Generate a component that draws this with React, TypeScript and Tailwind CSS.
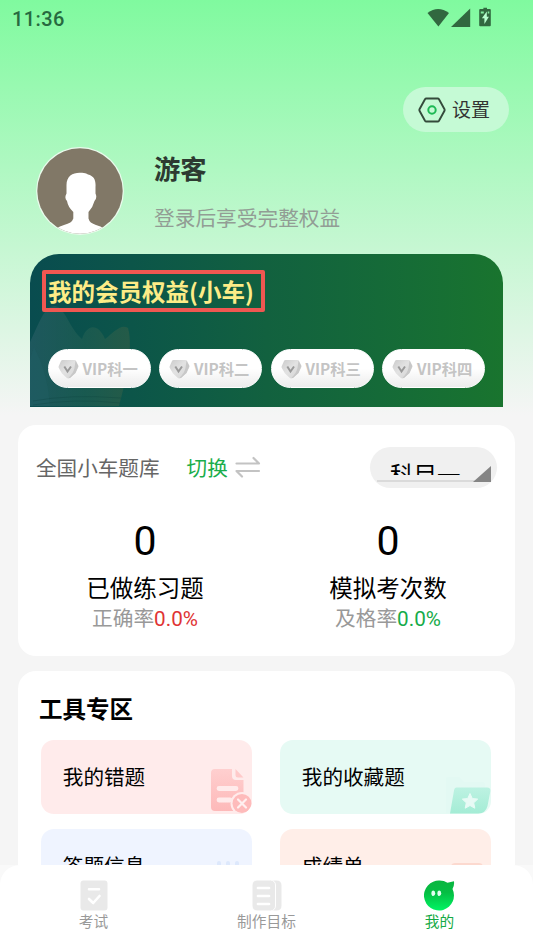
import React from "react";

const subjects = ["VIP科一", "VIP科二", "VIP科三", "VIP科四"];

function StatusBar() {
  return (
    <div className="flex h-9 items-center justify-between pl-3 pr-[39px] pt-0.5 text-[#276a40]">
      <span className="font-[Roboto] text-[20px] font-medium leading-[34px] tracking-[0.4px]">11:36</span>
      <svg className="mb-0.5" width="67" height="22" viewBox="0 0 67 22" fill="#31683f">
        <path d="M0.5 6Q11 -2.2 22 6L11.4 19.5Z" />
        <path d="M43.2 1.5V20H24Z" />
        <path d="M56.4 2V0.8h3.6V2h2.8q1 0 1 1v15.3q0 1-1 1h-9.6q-1 0-1-1V3q0-1 1-1Z" />
        <path d="M59.8 4.5l-4.9 6.8h2.5v5.6l4.5-7.1h-2.1Z" fill="#b9ffd0" />
        <path d="M53.8 4.4h3v2h-3zM60.7 4.4h1.6v2h-1.6z" fill="#83eba0" />
      </svg>
    </div>
  );
}

function Gem() {
  return (
    <svg width="21" height="20" viewBox="0 0 21 20">
      <defs>
        <linearGradient id="gem" x1="0" y1="0" x2="1" y2="1">
          <stop offset="0" stopColor="#cbcbcb" />
          <stop offset=".45" stopColor="#e2e2e2" />
          <stop offset="1" stopColor="#d4d4d4" />
        </linearGradient>
      </defs>
      <path d="M4.5 1h12q1 0 1.500.8L20.200 6.500q.4.800.1 1.800L17.500 14L12.500 18.500q-2.200 1.800-4.200 0L4 14.500L.8 9q-.4-.9-.1-1.8L3 1.900Q3.500 1 4.500 1Z" fill="url(#gem)" />
      <path d="M17.500 1.500L20.400 7L17.500 14L12 19L10.500 18.500Q15 15 16.500 9Z" fill="#c8c8c8" />
      <path d="M6.300 7.500l3.200 5L13 7.500" fill="none" stroke="#999" strokeWidth="2" />
    </svg>
  );
}

function MemberCard() {
  return (
    <section className="relative mx-[30px] flex h-[153px] flex-col justify-between overflow-hidden rounded-t-[29px] bg-linear-to-r from-[#094c4f] via-[#12613f] to-[#19742e] pb-[19px] pt-4">
      <svg className="absolute left-0 top-[50px]" width="104" height="103" viewBox="0 0 104 103">
        <defs>
          <linearGradient id="crown" x1="0" y1="0" x2="1" y2="0">
            <stop offset="0" stopColor="#2c6068" />
            <stop offset=".55" stopColor="#236053" />
            <stop offset="1" stopColor="#365f46" />
          </linearGradient>
        </defs>
        <path d="M0 38C9 20 14 2 25 2C35 3 39 24 52 35C57 20 68 19 75 35C83 29 91 19 98 24C104 44 94 84 89 102H0Z" fill="url(#crown)" opacity=".58" />
        <path d="M4 43Q18 69 20 102H0V56Z" fill="#23646b" opacity=".25" />
        <path d="M3 97Q40 90 91 94M3 101Q45 94 90 99" fill="none" stroke="#073c36" strokeOpacity=".25" />
      </svg>
      <h2 className="relative ml-3 flex h-[42px] w-[223px] items-center rounded-[2px] border-4 border-[#f05751] pl-0.5 text-[23.500px] font-bold leading-none text-[#fdec87]">
        <span className="whitespace-nowrap pt-0.5">我的会员权益(小车)</span>
      </h2>
      <div className="relative ml-[18px] grid w-[437px] grid-cols-4 gap-[9px]">
        {subjects.map((s) => (
          <div key={s} className="-ml-[0.500px] flex h-[39px] items-center gap-1 whitespace-nowrap rounded-full border border-white bg-linear-to-b from-white from-50% to-[#ececec] pl-[9px] text-[15.300px] font-bold text-[#c4c4c4]">
            <Gem />
            <span>{s}</span>
          </div>
        ))}
      </div>
    </section>
  );
}

function Stat({ label, rateLabel, color }: { label: string; rateLabel: string; color: string }) {
  return (
    <div className="flex w-[243px] flex-col items-center">
      <span className="h-[48px] font-[Roboto] text-[41px] leading-[48px] text-black">0</span>
      <span className="mt-[6px] text-[23.500px] leading-[32px] text-black">{label}</span>
      <span className="text-[20.700px] leading-[28px] text-[#999]">
        {rateLabel}
        <span className={"font-[Roboto] " + color}>0.0%</span>
      </span>
    </div>
  );
}

function PracticeCard() {
  return (
    <section className="mx-[18px] mt-[18px] h-[231px] rounded-[18px] bg-white pt-[22px]">
      <div className="flex h-[41px] items-center pl-[18px] pr-[18px] text-[20.600px]">
        <span className="text-[#666]">全国小车题库</span>
        <span className="ml-[27px] text-[#1aad4b]">切换</span>
        <svg className="mb-px ml-[7px]" width="26" height="22" viewBox="0 0 26 22" fill="none" stroke="#c3c3c3" strokeWidth="2.200" strokeLinejoin="round" strokeLinecap="round">
          <path d="M1.500 7.500H24L18.500 2M24 15H1.500L7 20.500" />
        </svg>
        <div className="ml-auto flex h-[41px] w-[127px] rounded-full bg-[#f0f0f0] pl-[7px]">
          <div className="flex h-[35px] w-[114px] items-end justify-between border-b-2 border-[#dadada]">
            <div className="mb-[5px] ml-[13px] h-[16px] overflow-hidden whitespace-nowrap text-[23.500px] leading-[30px] text-black">科目一</div>
            <svg className="-mb-0.5" width="18" height="16" viewBox="0 0 18 16"><path d="M18 0V16H0Z" fill="#858585" /></svg>
          </div>
        </div>
      </div>
      <div className="mt-[29px] flex pl-[5.500px]">
        <Stat label="已做练习题" rateLabel="正确率" color="text-[#e03434]" />
        <Stat label="模拟考次数" rateLabel="及格率" color="text-[#16ab4a]" />
      </div>
    </section>
  );
}

function WrongIcon() {
  return (
    <svg width="42" height="46" viewBox="0 0 42 46">
      <defs>
        <linearGradient id="wrong" x1="0" y1="0" x2="0" y2="1">
          <stop offset="0" stopColor="#ffcfcf" />
          <stop offset="1" stopColor="#fdb9b9" />
        </linearGradient>
      </defs>
      <path d="M5 1H22V8q0 4 4 4h7.500V38q0 5-5 5H5q-4 0-4-4V5q0-4 4-4Z" fill="url(#wrong)" />
      <path d="M25.500 1L33.500 9.500H28q-2.500 0-2.500-2.500Z" fill="#ffcaca" />
      <path d="M9 20.500H26M9 32H20" stroke="#ffebeb" strokeWidth="4.800" strokeLinecap="round" />
      <circle cx="32" cy="35.500" r="11.500" fill="#ffebeb" />
      <circle cx="32" cy="35.500" r="9.500" fill="#febbbb" />
      <path d="M28 31.500l8 8m0-8l-8 8" stroke="#fff0f0" strokeWidth="2.200" strokeLinecap="round" />
    </svg>
  );
}

function FavoriteIcon() {
  return (
    <svg width="46" height="38" viewBox="0 0 46 38">
      <defs>
        <linearGradient id="fav" x1="0" y1="0" x2="0" y2="1">
          <stop offset="0" stopColor="#bdf2e2" />
          <stop offset="1" stopColor="#a4ecd5" />
        </linearGradient>
      </defs>
      <path d="M1 3q0-2 2-2h11l5 5h18q3 0 3 3v4H10L5 37H1Z" fill="#e3f9f3" />
      <path d="M11.500 11.500H42q4 0 3.300 4L42.500 30q-2 7.500-9 7.500H5l4-23q.5-3 2.500-3Z" fill="url(#fav)" />
      <path d="M25 17.500l2.300 5 5.400.6-4 3.700 1.100 5.400-4.800-2.700-4.800 2.700 1.100-5.400-4-3.700 5.400-.6Z" fill="#e8faf5" stroke="#e8faf5" strokeLinejoin="round" />
    </svg>
  );
}

function Tool({ label, tint, children }: { label: string; tint: string; children?: React.ReactNode }) {
  return (
    <div className={"flex h-[74px] items-end justify-between overflow-hidden rounded-[13px] pl-[21.500px] " + tint}>
      <span className="self-center whitespace-nowrap pb-0.5 text-[20.600px] text-black">{label}</span>
      {children}
    </div>
  );
}

function ToolsCard() {
  return (
    <section className="mx-[18px] mt-[15px] h-[280px] shrink-0 rounded-[18px] bg-white pt-[21px]">
      <h2 className="pl-[21px] text-[23.500px] font-bold leading-8 text-black">工具专区</h2>
      <div className="ml-[23.300px] mr-[23.700px] mt-4 grid grid-cols-2 gap-x-7 gap-y-[15px]">
        <Tool label="我的错题" tint="bg-[#ffebeb]"><WrongIcon /></Tool>
        <Tool label="我的收藏题" tint="bg-[#e6faf4]"><FavoriteIcon /></Tool>
        <Tool label="答题信息" tint="bg-[#eff4ff]">
          <svg className="mr-3 mb-[34px]" width="24" height="9" viewBox="0 0 24 9" fill="#dde8fc">
            <rect x="1" y="1" width="4" height="8" rx="2" /><rect x="10" y="1" width="4" height="8" rx="2" /><rect x="19" y="1" width="4" height="8" rx="2" />
          </svg>
        </Tool>
        <Tool label="成绩单" tint="bg-[#ffeee8]">
          <div className="mr-2 h-10 w-8 rounded-t bg-[#fcd9cf]" />
        </Tool>
      </div>
    </section>
  );
}

function BottomNav() {
  return (
    <div className="h-[83px] shrink-0 bg-[#f9f9f9]">
      <nav className="grid h-full grid-cols-[187px_159px_187px] rounded-t-[20px] bg-white pt-[15px] text-[14.700px] leading-5 text-[#999]">
        <div className="flex flex-col items-center">
          <svg width="28" height="31" viewBox="0 0 28 31">
            <rect x=".5" y=".5" width="27" height="30" rx="3" fill="#e9e9e9" />
            <path d="M9 9.300h10M9 19l4.200 4 6.300-7" fill="none" stroke="white" strokeWidth="2.600" strokeLinecap="round" strokeLinejoin="round" />
          </svg>
          <span>考试</span>
        </div>
        <div className="flex flex-col items-center">
          <svg width="30" height="31" viewBox="0 0 30 31">
            <path d="M19 .5h5.500q5 0 5 5v20q0 5-5 5H19Z" fill="#e9e9e9" />
            <rect x="0" y="0" width="23.500" height="31" rx="5" fill="#e9e9e9" stroke="white" strokeWidth="1" />
            <path d="M6 8h11M6 16h11M6 24h11" stroke="white" strokeWidth="2.700" strokeLinecap="round" />
          </svg>
          <span>制作目标</span>
        </div>
        <div className="flex flex-col items-center text-[#16aa45]">
          <svg width="31" height="31" viewBox="0 0 31 31">
            <defs>
              <linearGradient id="mine" x1="0" y1="0" x2="0" y2="1">
                <stop offset="0" stopColor="#0ab540" />
                <stop offset=".4" stopColor="#05be43" />
                <stop offset="1" stopColor="#00f463" />
              </linearGradient>
            </defs>
            <path d="M15.500.5Q20 .5 23.500 2.800L30 1.200Q30.500 6 28.500 9A15 15 0 1 1 15.500.5Z" fill="url(#mine)" />
            <ellipse cx="9.300" cy="13.300" rx="1.900" ry="2.800" fill="#dffff0" />
            <ellipse cx="15.300" cy="13.300" rx="1.900" ry="2.800" fill="#dffff0" />
          </svg>
          <span>我的</span>
        </div>
      </nav>
    </div>
  );
}

export default function App() {
  return (
    <div className="flex h-[948px] w-[533px] flex-col overflow-hidden bg-[#f5f5f5] font-['Noto_Sans_CJK_SC','Noto_Sans',sans-serif]">
      <main className="h-[865px] overflow-hidden bg-[linear-gradient(to_bottom,#80fa9f_0px,#f5f5f5_415px)]">
        <StatusBar />
        <header className="h-[218px]">
          <div className="flex justify-end pr-6 pt-[51px]">
            <button className="flex h-[45px] w-[106px] items-center gap-[6px] rounded-full bg-[#c5fad5] pl-[15px] text-[19px] text-[#333]">
              <svg width="28" height="26" viewBox="0 0 28 26" fill="none">
                <path d="M8.300 1.500H19.700Q20.500 1.500 21 2.300L26.500 12.200Q26.900 13 26.500 13.800L21 23.700Q20.500 24.500 19.700 24.500H8.300Q7.500 24.500 7 23.700L1.500 13.800Q1.100 13 1.500 12.200L7 2.300Q7.500 1.500 8.300 1.500Z" stroke="#344a3b" strokeWidth="1.900" />
                <circle cx="14" cy="13" r="3.700" stroke="#1db954" strokeWidth="2" />
              </svg>
              <span className="whitespace-nowrap">设置</span>
            </button>
          </div>
          <div className="mt-[15px] flex pl-9">
            <svg width="88" height="88" viewBox="0 0 88 88">
              <defs>
                <clipPath id="face"><circle cx="44" cy="44" r="42.700" /></clipPath>
              </defs>
              <circle cx="44" cy="44" r="43.900" fill="#eafbed" />
              <circle cx="44" cy="44" r="42.700" fill="#817867" />
              <path clipPath="url(#face)" d="M30.500 38C30.500 29 37 25.500 44.500 25.800C47 25.300 50 26 52 27.500C58 29 60 33 59.500 40V46.500Q61.500 51 58.500 54Q57 60 52.500 65V71.500Q53.500 76 60 78Q71 81 74 89H14Q18 81 28 78Q36 76 37.300 71.500V65Q32 60 31 54Q28 51 30.500 46.500Z" fill="white" />
            </svg>
            <div className="ml-[30px]">
              <div className="h-[43px] text-[26.300px] font-bold leading-[42px] text-[#2d3a31]">游客</div>
              <div className="mt-3 text-[20.700px] leading-[30px] text-[#929d95]">登录后享受完整权益</div>
            </div>
          </div>
        </header>
        <MemberCard />
        <PracticeCard />
        <ToolsCard />
      </main>
      <BottomNav />
    </div>
  );
}
